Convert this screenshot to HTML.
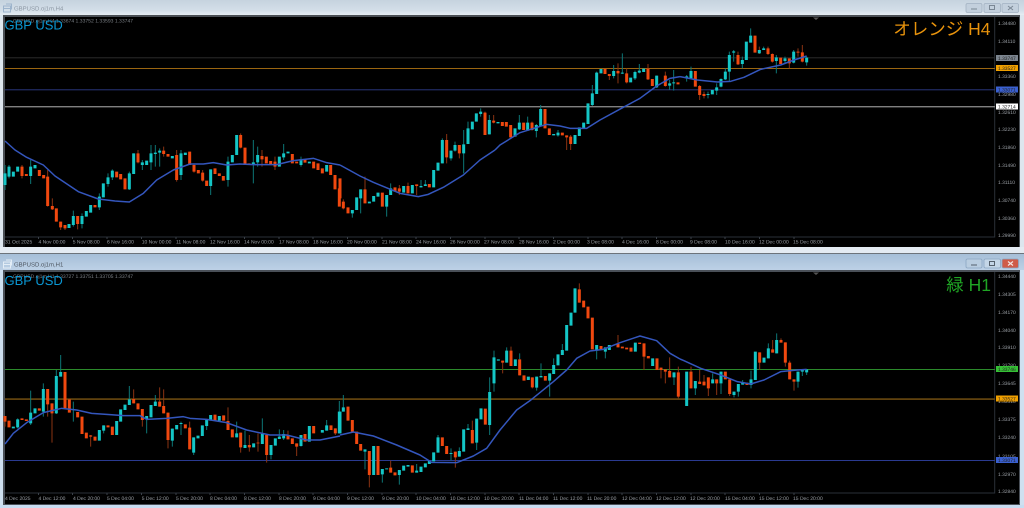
<!DOCTYPE html>
<html><head><meta charset="utf-8">
<style>
html,body{margin:0;padding:0;background:#cfe0f0;width:1024px;height:508px;overflow:hidden}
svg{display:block;position:absolute;left:0;top:0;font-family:"Liberation Sans","Noto Sans CJK JP",sans-serif;text-rendering:geometricPrecision;filter:blur(.3px)}
.ub{fill:none;stroke:#14c6c6;stroke-width:9}
.db{fill:none;stroke:#f0480f;stroke-width:9}
.uw{fill:none;stroke:#0c7676;stroke-width:3}
.dw{fill:none;stroke:#8a3312;stroke-width:3}
.ma{fill:none;stroke:#3456bd;stroke-width:4.5;stroke-linejoin:round}
.tm text{font-size:5px;fill:#9a9fa5}
.pr text{font-size:4.9px;fill:#9a9fa5}
.tag{font-size:4.9px;fill:#222}
</style></head><body>
<svg width="1024" height="508" viewBox="0 0 1024 508" xmlns="http://www.w3.org/2000/svg">
<defs>
<linearGradient id="g1" x1="0" y1="0" x2="0" y2="1"><stop offset="0" stop-color="#c6d3df"/><stop offset=".7" stop-color="#d4dfe9"/><stop offset="1" stop-color="#e6edf3"/></linearGradient>
<linearGradient id="g2" x1="0" y1="0" x2="0" y2="1"><stop offset="0" stop-color="#a6bfd8"/><stop offset="1" stop-color="#bdd1e6"/></linearGradient>
</defs>
<rect width="1024" height="508" fill="#cfe0f0"/>
<!-- top window -->
<rect x="0" y="0" width="1024" height="15" fill="url(#g1)"/>
<rect x="0" y="15" width="1024" height="236" fill="#dde6ee"/>
<rect x="3" y="15" width="1017" height="233" fill="#4a4f55"/>
<rect x="5" y="17" width="1014" height="230" fill="#000"/>
<!-- lower window -->
<rect x="0" y="247" width="1024" height="6" fill="#e4ebf2"/>
<rect x="0" y="253" width="1024" height="1.5" fill="#6d747b"/>
<rect x="0" y="254" width="1024" height="16" fill="url(#g2)"/>
<rect x="3" y="270" width="1017" height="235" fill="#4a5058"/>
<rect x="5" y="272" width="1014" height="232" fill="#000"/>
<rect x="0" y="505" width="1024" height="3" fill="#c8dcf1"/>
<!-- title icons -->
<g fill="none" stroke="#9db4cc" stroke-width="1" transform="translate(0,1.5)"><rect x="3.5" y="4.5" width="7" height="6"/><path d="M3.5 7H10.5M6 2.5H11.5V8"/></g>
<g fill="none" stroke="#e3edf6" stroke-width="1" transform="translate(0,1.5)"><rect x="3.5" y="260.5" width="7" height="6"/><path d="M3.5 263H10.5M6 258.5H11.5V264"/></g>
<text x="14" y="10.5" font-size="6" fill="#8d98a4">GBPUSD.oj1m,H4</text>
<text x="14" y="266.5" font-size="6" fill="#4e5660">GBPUSD.oj1m,H1</text>
<!-- window buttons -->
<g stroke="#a3b2c2" stroke-width=".8" fill="#c3d0dd">
<rect x="966" y="3.5" width="16" height="9" rx="1.5"/><rect x="984" y="3.5" width="16.5" height="9" rx="1.5"/><rect x="1002" y="3.5" width="16.5" height="9" rx="1.5"/>
</g>
<g fill="none" stroke="#7a8794" stroke-width="1"><path d="M971 9H977"/><rect x="989.5" y="5.5" width="5" height="4"/><path d="M1008 6L1013 10M1013 6L1008 10"/></g>
<g stroke="#8ba6c2" stroke-width=".8">
<rect x="966" y="259" width="16" height="9" rx="1.5" fill="#b9cde0"/><rect x="984" y="259" width="16.5" height="9" rx="1.5" fill="#c4d6e7"/><rect x="1002" y="259" width="16.5" height="9" rx="1.5" fill="#cf5b47"/>
</g>
<g fill="none" stroke="#54606c" stroke-width="1"><path d="M971 265H977"/><rect x="989.5" y="261.5" width="5" height="4"/></g>
<path d="M1008 261.5L1013 265.5M1013 261.5L1008 265.5" stroke="#f3e4e0" stroke-width="1.2" fill="none"/>
<!-- axes -->
<path d="M994.7 17V237H5" fill="none" stroke="#2a3038" stroke-width="1"/>
<path d="M994.7 272V493H5" fill="none" stroke="#2a3038" stroke-width="1"/>
<path d="M813 17.5h6l-3 2.5z" fill="#555"/>
<path d="M813 272.5h6l-3 2.5z" fill="#555"/>
<!-- horizontal lines top -->
<rect x="5" y="57.3" width="990" height="1" fill="#2c2c2c"/>
<rect x="5" y="68" width="990" height="1" fill="#9a6510"/>
<rect x="5" y="89.3" width="990" height="1" fill="#28357a"/>
<rect x="5" y="106" width="990" height="1.4" fill="#7f7f7f"/>
<!-- horizontal lines bottom -->
<rect x="5" y="369" width="990" height="1" fill="#2b8a2b"/>
<rect x="5" y="398.3" width="990" height="1.6" fill="#6b4a10"/>
<rect x="5" y="460" width="990" height="1" fill="#2a3a90"/>

<!-- top candles -->
<g transform="translate(0,150) scale(.33333)">
<path class="uw" d="M15 45V120M27 45V85M92 30V102M220 182V230M246 190V235M298 130V180M324 70V110M337 58V90M388 65V120M401 10V72M543 0V90M632 58V135M684 20V110"/>
<path class="dw" d="M66 45V85M143 60V170M157 145V180M182 215V240M195 225V240M233 198V238M530 0V95M582 40V68M608 60V95"/>
<path class="ub" d="M15 70V105M27 50V80M40 65V80M53 50V65M92 50V78M105 45V55M207 222V234M220 198V225M246 198V222M259 183V200M272 165V188M298 140V172M310 100V142M324 82V102M337 62V82M388 70V118M543 10V75M632 58V108M684 35V90M980 45V65"/>
<path class="db" d="M66 50V78M79 72V78M118 60V78M131 75V85M143 80V168M157 168V178M169 175V215M182 215V232M195 225V235M233 198V222M285 165V172M350 65V82M362 72V88M375 85V118M530 15V90M582 45V65M595 60V70M608 68V92M620 92V108M645 55V72M658 70V78M670 78V92M967 55V70M992 45V75M1005 75V118M1018 115V170"/>
</g>
<g transform="scale(.33333)">
<path class="uw" d="M427 480V510M453 435V510M466 435V500M479 445V500M760 420V550M773 440V500M851 432V480M903 470V500"/>
<path class="dw" d="M414 450V490M491 440V470M786 450V500M722 400V445M825 470V510"/>
<path class="ub" d="M401 460V522M427 487V495M440 482V495M453 460V487M466 458V462M479 452V458M517 468V475M556 458V465M697 465V487M710 405V465M760 487V495M773 465V487M838 470V500M851 460V472M864 455V460M903 478V495M928 485V490"/>
<path class="db" d="M414 460V487M491 452V462M504 462V470M569 455V495M722 405V443M735 443V495M747 490V495M786 468V478M799 470V490M812 483V495M825 485V500M877 462V490M890 485V490M915 478V488M941 485V505M954 490V510"/>
</g>
<g transform="translate(340,150) scale(.33333)">
<path class="uw" d="M37 180V203M62 118V190M140 135V200M152 100V135M243 90V112M256 90V108"/>
<path class="dw" d="M10 148V178M75 80V160M178 105V135M204 98V130M230 103V135"/>
<path class="ub" d="M37 180V190M50 142V180M62 118V145M88 155V160M101 138V155M114 128V140M140 135V170M152 115V135M191 108V128M217 105V130M243 108V112M256 103V108M281 60V112M294 38V62"/>
<path class="db" d="M0 85V145M10 155V175M24 172V190M75 118V160M127 128V170M165 112V125M178 115V125M204 108V130M230 103V108M268 102V112"/>
</g>
<g transform="translate(340,0) scale(.33333)">
<path class="uw" d="M307 415V490M333 452V482M345 425V455M371 390V520M384 365V432M422 325V350M448 345V403M538 345V390M563 350V392M589 372V412M602 315V378M654 390V410M757 255V318M770 215V282M821 195V235M847 160V222M885 212V240M898 192V220M950 227V264M989 240V270M1001 210V272"/>
<path class="dw" d="M320 402V490M358 435V475M435 335V405M461 345V370M512 375V412M576 365V392M680 406V450M692 405V450M808 222V240M834 190V250M860 205V250M924 192V240M976 215V260"/>
<path class="ub" d="M307 420V490M333 452V475M345 435V452M371 433V460M384 385V432M397 365V388M409 340V365M422 335V342M448 360V403M474 366V370M525 385V410M538 368V388M563 368V392M589 375V393M602 327V378M641 402V406M654 398V406M705 405V432M718 382V408M731 368V385M744 310V372M757 280V315M770 218V282M783 207V220M821 213V228M847 218V221M872 233V247M885 216V235M898 212V218M911 206V216M950 227V262M989 250V257M1001 247V250"/>
<path class="db" d="M320 420V472M358 435V460M435 338V405M461 362V368M487 366V378M499 366V380M512 375V412M551 368V390M576 368V390M615 327V385M628 385V405M667 398V406M680 406V412M692 410V432M795 207V222M808 222V228M834 213V220M860 220V247M924 206V238M937 237V258M976 227V258M1014 247V253"/>
</g>
<g transform="translate(684,0) scale(.33333)">
<path class="uw" d="M8 225V245M21 200V235M72 275V295M98 250V285M111 235V262M124 205V240M136 155V243M149 150V185M175 170V205M200 85V128M239 140V150M277 165V220M303 170V190M329 150V190M368 170V197"/>
<path class="dw" d="M47 255V300M60 275V295M162 155V195M226 140V162M252 140V165M265 160V188M316 175V205M342 145V170M355 135V187"/>
<path class="ub" d="M8 229V235M21 213V235M72 282V285M85 270V283M98 262V272M111 237V260M124 215V238M136 165V215M149 154V158M175 180V192M187 125V180M200 107V128M226 150V160M239 145V150M277 172V183M303 175V183M329 155V188M368 173V187"/>
<path class="db" d="M34 213V260M47 258V285M60 282V288M162 165V193M213 107V158M252 145V162M265 162V185M290 173V192M316 175V190M342 155V158M355 157V185"/>
</g>
<!-- top MA -->
<g transform="scale(.33333)"><path class="ma" d="M15 423L45 450L80 472L130 495L165 528L235 575L295 597L345 603L388 606L430 580L470 540L520 510L570 492L610 492L640 488L680 495L720 492L760 494L830 494L880 482L940 475L980 488L1020 495"/></g>
<g transform="translate(340,150) scale(.33333)"><path class="ma" d="M0 45L60 78L100 97L180 130L235 140L265 133L310 112L370 75L420 30L465 0"/></g>
<g transform="translate(340,0) scale(.33333)"><path class="ma" d="M465 450L480 435L540 398L620 373L660 378L690 385L740 385L780 360L850 322L900 295L950 258L990 235L1020 230"/></g>
<g transform="translate(684,0) scale(.33333)"><path class="ma" d="M-12 230L0 232L40 240L100 246L140 244L180 232L230 208L290 195L330 180L368 168"/></g>

<!-- bottom candles -->
<g transform="translate(0,320) scale(.33333)">
<path class="uw" d="M53 295V325M92 212V315M130 190V290M169 150V282M182 105V170M220 245V305M311 316V340M388 198V255M440 288V340M466 225V258M517 326V380M543 305V345M581 352V405M620 300V330M787 295V372M710 305V352M735 332V384M813 375V418M838 328V357M851 330V360M903 345V380M980 300V332M1018 243V340"/>
<path class="dw" d="M15 288V320M143 207V290M156 250V368M272 345V380M401 208V250M427 267V320M479 202V260M491 208V280M504 278V385M569 305V388M684 262V330M722 338V398M748 345V395M774 340V395M800 345V428M864 332V358M890 370V408M1006 325V345"/>
<path class="ub" d="M40 320V325M53 298V322M92 278V310M105 265V280M130 207V275M169 168V280M182 156V170M298 330V362M311 316V332M350 303V345M362 268V305M375 254V270M388 238V255M440 288V298M453 255V292M466 245V258M517 326V362M530 315V328M543 309V312M581 352V398M594 347V355M607 316V348M620 300V318M632 285V302M658 288V302M710 340V352M735 375V384M761 370V382M787 342V372M813 375V405M826 355V377M838 350V357M851 342V355M903 345V378M928 318V365M967 330V338M980 316V332M1018 275V340"/>
<path class="db" d="M15 288V305M27 302V322M66 295V300M79 298V303M118 265V272M143 207V253M156 250V280M195 156V265M208 238V278M233 276V292M246 290V342M259 338V355M272 346V350M285 350V362M324 316V322M337 320V345M401 237V250M414 250V268M427 267V300M479 245V260M491 258V280M504 278V360M556 313V325M569 323V388M645 284V302M671 286V302M684 303V330M697 328V352M722 338V382M748 375V382M774 368V370M800 345V405M864 345V358M877 355V372M890 370V380M915 342V365M941 318V340M993 316V330M1006 325V340"/>
</g>
<g transform="translate(340,320) scale(.33333)">
<path class="uw" d="M10 225V275M75 388V448M101 378V465M127 447V488M178 450V494M230 432V458M294 345V398M333 385V422M358 382V410M384 312V330M410 296V390M449 172V345M462 92V215M500 82V128M539 100V118M590 170V212M603 130V172M629 160V230M641 115V162M667 72V105M705 -95V-22M770 75V118M796 82V115M1002 157V195"/>
<path class="dw" d="M88 393V502M152 422V458M24 260V302M346 395V443M397 302V370M488 122V160M513 80V138M539 118V166M577 172V205M718 -110V-52M834 45V82M912 70V150M963 143V175M976 148V190M989 112V172M1015 140V235"/>
<path class="ub" d="M0 275V340M10 262V275M75 388V395M101 378V465M127 447V463M140 445V448M178 450V465M191 437V452M204 435V440M230 452V458M243 440V456M256 430V442M268 422V432M281 397V424M294 352V398M333 399V402M358 393V410M371 328V395M384 325V330M410 296V368M423 265V298M449 216V315M462 112V190M475 118V122M500 92V128M526 118V138M565 170V180M590 170V203M603 168V172M629 160V182M641 135V162M654 103V136M667 90V105M680 15V92M693 -22V17M705 -95V-22M770 75V92M796 82V95M808 75V90M886 68V95M938 115V138M1002 157V172"/>
<path class="db" d="M24 260V302M37 300V335M50 335V372M62 372V392M88 393V465M114 378V465M152 443V458M165 457V466M217 436V458M307 352V378M320 378V402M346 395V412M397 330V370M436 266V314M488 122V128M513 92V138M539 118V166M552 166V182M577 172V202M616 168V182M718 -92V-52M731 -58V-38M744 -40V-5M757 -7V88M783 78V88M834 72V82M847 80V85M860 83V88M873 83V95M899 68V72M912 70V110M925 108V115M951 115V150M963 143V150M976 148V155M989 153V172M1015 157V230"/>
</g>
<g transform="translate(684,320) scale(.33333)">
<path class="uw" d="M34 183V225M86 160V190M111 155V222M150 215V232M163 192V230M176 180V194M201 152V205M253 70V115M278 40V100M342 155V203M355 150V168M368 148V165"/>
<path class="dw" d="M21 140V205M47 150V192M60 165V196M73 172V228M98 178V225M137 178V228M227 97V150M266 60V98M291 55V68M304 67V140M317 122V178M330 178V212"/>
<path class="ub" d="M8 155V258M34 183V205M86 178V190M111 155V190M150 215V225M163 192V215M176 186V194M201 178V195M214 95V180M240 113V128M253 85V115M278 60V100M342 155V185M355 150V155M368 148V157"/>
<path class="db" d="M21 155V205M47 185V192M60 185V196M73 172V205M98 178V190M124 155V178M137 178V222M189 188V195M227 97V128M266 88V98M291 60V68M304 67V128M317 128V178M330 178V185"/>
</g>
<!-- bottom MA -->
<g transform="translate(0,320) scale(.33333)"><path class="ma" d="M15 372L40 340L80 308L130 278L185 265L230 270L275 280L330 284L370 287L420 287L440 298L500 295L550 290L570 295L620 298L680 308L740 330L810 345L860 345L920 360L960 360L1020 348"/></g>
<g transform="translate(340,320) scale(.33333)"><path class="ma" d="M0 345L40 336L100 348L170 375L240 405L275 427L350 428L400 408L440 385L480 330L530 270L570 242L640 185L680 150L710 115L750 93L790 88L840 68L900 48L950 62L990 100L1020 117"/></g>
<g transform="translate(684,320) scale(.33333)"><path class="ma" d="M-12 117L0 122L50 145L110 165L160 185L200 192L240 180L290 155L340 150L368 148"/></g>

<!-- header texts -->
<text x="13" y="22.5" font-size="5.05" fill="#7a7f85">GBPUSD.oj1m,H4 1.33674 1.33752 1.33593 1.33747</text>
<text x="13" y="278" font-size="5.05" fill="#7a7f85">GBPUSD.oj1m,H1 1.33727 1.33751 1.33705 1.33747</text>
<text x="4.5" y="29.5" font-size="13" fill="#0a96d2">GBP USD</text>
<text x="4.5" y="285" font-size="13" fill="#0a96d2">GBP USD</text>
<text x="990.5" y="35" font-size="17.5" text-anchor="end" fill="#e8930c">オレンジ H4</text>
<text x="991" y="291" font-size="17.5" text-anchor="end" fill="#1fa524">緑 H1</text>

<!-- price labels -->
<g class="pr">
<text x="998" y="25">1.34480</text><text x="998" y="43">1.34110</text><text x="998" y="78">1.33360</text><text x="998" y="96">1.32980</text><text x="998" y="114">1.32610</text><text x="998" y="131">1.32230</text><text x="998" y="149">1.31860</text><text x="998" y="167">1.31490</text><text x="998" y="184">1.31110</text><text x="998" y="202">1.30740</text><text x="998" y="220">1.30360</text><text x="998" y="237">1.29990</text>
<text x="998" y="278">1.34440</text><text x="998" y="296">1.34305</text><text x="998" y="314">1.34170</text><text x="998" y="332">1.34040</text><text x="998" y="349">1.33910</text><text x="998" y="367">1.33780</text><text x="998" y="385">1.33645</text><text x="998" y="403">1.33510</text><text x="998" y="421">1.33375</text><text x="998" y="439">1.33240</text><text x="998" y="458">1.33105</text><text x="998" y="476">1.32970</text><text x="998" y="493">1.32840</text>
</g>
<!-- price tags -->
<rect x="996" y="55" width="22" height="6" fill="#7c858f"/><text class="tag" x="998" y="59.8">1.33747</text>
<rect x="996" y="65" width="22" height="6" fill="#f0a000"/><text class="tag" x="998" y="69.8">1.33527</text>
<rect x="996" y="86.5" width="22" height="6" fill="#3a60d0"/><text class="tag" x="998" y="91.3">1.33071</text>
<rect x="996" y="103.5" width="22" height="6" fill="#fff"/><text class="tag" x="998" y="108.3">1.32714</text>
<rect x="996" y="366" width="22" height="6" fill="#35c035"/><text class="tag" x="998" y="370.8">1.33746</text>
<rect x="996" y="395.5" width="22" height="6" fill="#f0a000"/><text class="tag" x="998" y="400.3">1.33527</text>
<rect x="996" y="457" width="22" height="6" fill="#3a60d0"/><text class="tag" x="998" y="461.8">1.33071</text>

<!-- time labels top -->
<g class="tm">
<text x="5" y="243.5">31 Oct 2025</text><text x="38.5" y="243.5">4 Nov 00:00</text><text x="72.7" y="243.5">5 Nov 08:00</text><text x="107" y="243.5">6 Nov 16:00</text><text x="141.7" y="243.5">10 Nov 00:00</text><text x="176" y="243.5">11 Nov 08:00</text><text x="210" y="243.5">12 Nov 16:00</text><text x="244" y="243.5">14 Nov 00:00</text><text x="279" y="243.5">17 Nov 08:00</text><text x="313" y="243.5">18 Nov 16:00</text><text x="347" y="243.5">20 Nov 00:00</text><text x="382" y="243.5">21 Nov 08:00</text><text x="416" y="243.5">24 Nov 16:00</text><text x="450" y="243.5">26 Nov 00:00</text><text x="484" y="243.5">27 Nov 08:00</text><text x="519" y="243.5">28 Nov 16:00</text><text x="553" y="243.5">2 Dec 00:00</text><text x="587" y="243.5">3 Dec 08:00</text><text x="622" y="243.5">4 Dec 16:00</text><text x="656" y="243.5">8 Dec 00:00</text><text x="690" y="243.5">9 Dec 08:00</text><text x="725" y="243.5">10 Dec 16:00</text><text x="759" y="243.5">12 Dec 00:00</text><text x="793" y="243.5">15 Dec 08:00</text>
</g>
<!-- time labels bottom -->
<g class="tm">
<text x="5" y="500">4 Dec 2025</text><text x="38.5" y="500">4 Dec 12:00</text><text x="73" y="500">4 Dec 20:00</text><text x="107" y="500">5 Dec 04:00</text><text x="141.7" y="500">5 Dec 12:00</text><text x="176" y="500">5 Dec 20:00</text><text x="210" y="500">8 Dec 04:00</text><text x="244" y="500">8 Dec 12:00</text><text x="279" y="500">8 Dec 20:00</text><text x="313" y="500">9 Dec 04:00</text><text x="347" y="500">9 Dec 12:00</text><text x="382" y="500">9 Dec 20:00</text><text x="416" y="500">10 Dec 04:00</text><text x="450" y="500">10 Dec 12:00</text><text x="484" y="500">10 Dec 20:00</text><text x="519" y="500">11 Dec 04:00</text><text x="553" y="500">11 Dec 12:00</text><text x="587" y="500">11 Dec 20:00</text><text x="622" y="500">12 Dec 04:00</text><text x="656" y="500">12 Dec 12:00</text><text x="690" y="500">12 Dec 20:00</text><text x="725" y="500">15 Dec 04:00</text><text x="759" y="500">15 Dec 12:00</text><text x="793" y="500">15 Dec 20:00</text>
</g>
<!-- axis ticks -->
<path d="M38.5 237v2M72.5 237v2M107 237v2M141.5 237v2M176 237v2M210 237v2M244.5 237v2M279 237v2M313 237v2M347.5 237v2M382 237v2M416 237v2M450.5 237v2M485 237v2M519 237v2M553.5 237v2M588 237v2M622 237v2M656.5 237v2M691 237v2M725 237v2M759.5 237v2M794 237v2M38.5 493v2M72.5 493v2M107 493v2M141.5 493v2M176 493v2M210 493v2M244.5 493v2M279 493v2M313 493v2M347.5 493v2M382 493v2M416 493v2M450.5 493v2M485 493v2M519 493v2M553.5 493v2M588 493v2M622 493v2M656.5 493v2M691 493v2M725 493v2M759.5 493v2M794 493v2" stroke="#3a4048" stroke-width="1" fill="none"/>
</svg>
</body></html>
